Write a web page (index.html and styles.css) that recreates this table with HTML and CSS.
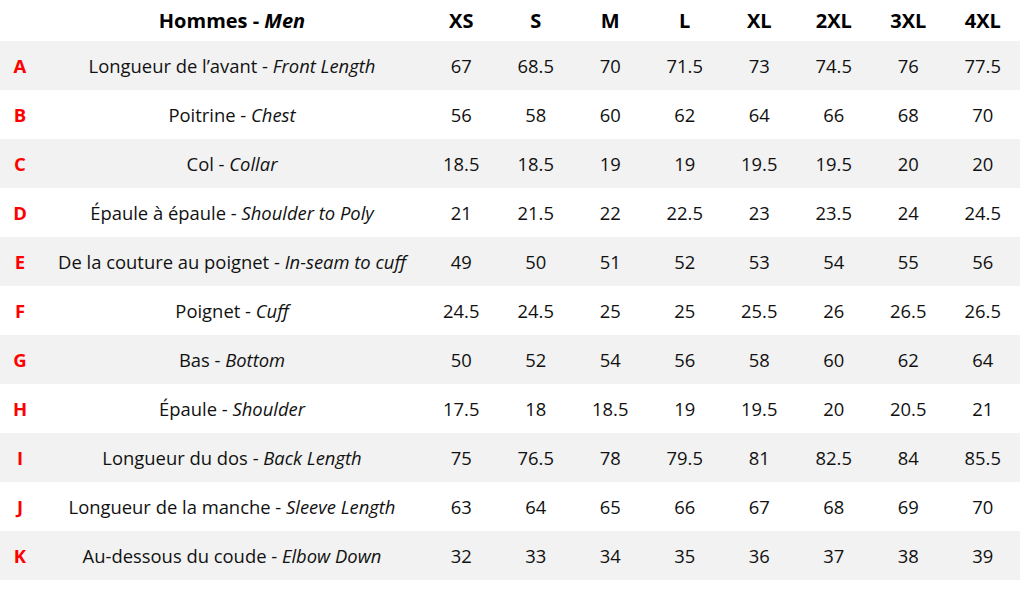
FILE: index.html
```html
<!DOCTYPE html>
<html lang="fr">
<head>
<meta charset="utf-8">
<title>Hommes - Men</title>
<link rel="stylesheet" href="styles.css">
</head>
<body>
<table class="sizes">
  <colgroup>
    <col class="c-letter"><col class="c-label">
    <col class="c-size"><col class="c-size"><col class="c-size"><col class="c-size">
    <col class="c-size"><col class="c-size"><col class="c-size"><col class="c-size">
  </colgroup>
  <thead>
    <tr class="head">
      <th></th>
      <th>Hommes - <em>Men</em></th>
      <th>XS</th><th>S</th><th>M</th><th>L</th><th>XL</th><th>2XL</th><th>3XL</th><th>4XL</th>
    </tr>
  </thead>
  <tbody>
    <tr><td class="letter">A</td><td>Longueur de l’avant - <em>Front Length</em></td><td>67</td><td>68.5</td><td>70</td><td>71.5</td><td>73</td><td>74.5</td><td>76</td><td>77.5</td></tr>
    <tr><td class="letter">B</td><td>Poitrine - <em>Chest</em></td><td>56</td><td>58</td><td>60</td><td>62</td><td>64</td><td>66</td><td>68</td><td>70</td></tr>
    <tr><td class="letter">C</td><td>Col - <em>Collar</em></td><td>18.5</td><td>18.5</td><td>19</td><td>19</td><td>19.5</td><td>19.5</td><td>20</td><td>20</td></tr>
    <tr><td class="letter">D</td><td>Épaule à épaule - <em>Shoulder to Poly</em></td><td>21</td><td>21.5</td><td>22</td><td>22.5</td><td>23</td><td>23.5</td><td>24</td><td>24.5</td></tr>
    <tr><td class="letter">E</td><td>De la couture au poignet - <em>In-seam to cuff</em></td><td>49</td><td>50</td><td>51</td><td>52</td><td>53</td><td>54</td><td>55</td><td>56</td></tr>
    <tr><td class="letter">F</td><td>Poignet - <em>Cuff</em></td><td>24.5</td><td>24.5</td><td>25</td><td>25</td><td>25.5</td><td>26</td><td>26.5</td><td>26.5</td></tr>
    <tr><td class="letter">G</td><td>Bas - <em>Bottom</em></td><td>50</td><td>52</td><td>54</td><td>56</td><td>58</td><td>60</td><td>62</td><td>64</td></tr>
    <tr><td class="letter">H</td><td>Épaule - <em>Shoulder</em></td><td>17.5</td><td>18</td><td>18.5</td><td>19</td><td>19.5</td><td>20</td><td>20.5</td><td>21</td></tr>
    <tr><td class="letter">I</td><td>Longueur du dos - <em>Back Length</em></td><td>75</td><td>76.5</td><td>78</td><td>79.5</td><td>81</td><td>82.5</td><td>84</td><td>85.5</td></tr>
    <tr><td class="letter">J</td><td>Longueur de la manche - <em>Sleeve Length</em></td><td>63</td><td>64</td><td>65</td><td>66</td><td>67</td><td>68</td><td>69</td><td>70</td></tr>
    <tr><td class="letter">K</td><td>Au-dessous du coude - <em>Elbow Down</em></td><td>32</td><td>33</td><td>34</td><td>35</td><td>36</td><td>37</td><td>38</td><td>39</td></tr>
  </tbody>
</table>
</body>
</html>
```

FILE: styles.css
```css
html, body {
  margin: 0;
  padding: 0;
  background: #ffffff;
}
body {
  font-family: "Open Sans", "Lato", sans-serif;
  color: #111111;
}
.sizes {
  border-collapse: collapse;
  table-layout: fixed;
  width: 1020px;
}
.c-letter { width: 40px; }
.c-label { width: 384px; }
.c-size { width: 74.5px; }
.sizes th,
.sizes td {
  padding: 0;
  text-align: center;
  vertical-align: middle;
  white-space: nowrap;
}
.sizes th {
  height: 41px;
  font-size: 20px;
  font-weight: 700;
  color: #000000;
}
.sizes td {
  height: 49px;
  font-size: 18.4px;
}
.sizes tbody tr:nth-child(odd) {
  background: #f2f2f2;
}
.sizes td.letter {
  color: #ff0000;
  font-weight: 700;
  font-size: 18.5px;
}
```
